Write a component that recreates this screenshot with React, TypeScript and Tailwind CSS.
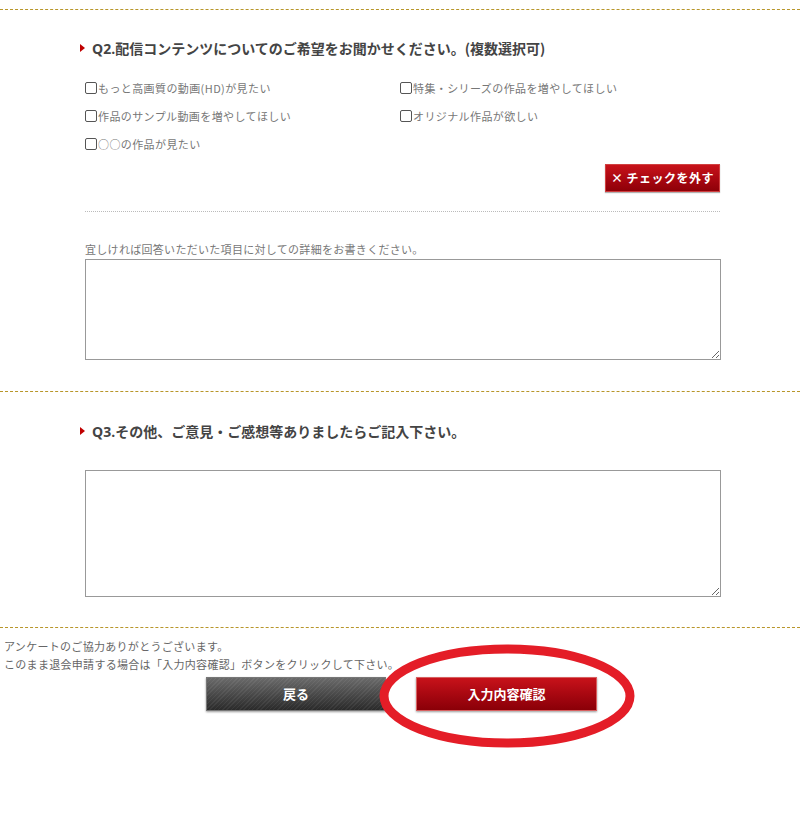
const jp = { fontFamily: '"Noto Sans CJK JP", "Open Sans", sans-serif' }
const head = { fontFamily: '"Open Sans", "Noto Sans CJK JP", sans-serif' }

const options = [
  ['もっと高画質の動画(HD)が見たい', '特集・シリーズの作品を増やしてほしい'],
  ['作品のサンプル動画を増やしてほしい', 'オリジナル作品が欲しい'],
  ['○○の作品が見たい', ''],
]

function Divider() {
  return <div className="h-0 w-full border-t border-dashed border-[#b8962a]" />
}

function Heading({ q, text }: { q: string; text: string }) {
  return (
    <h2 className="flex h-5 items-center pl-[80px] text-[14px] font-bold text-[#444]" style={head}>
      <span className="mr-[7px] h-0 w-0 border-y-[4px] border-l-[5px] border-y-transparent border-l-[#c00000]" />
      <span>{q}</span>
      <span style={jp}>{text}</span>
    </h2>
  )
}

function Check({ label }: { label: string }) {
  if (!label) return <div />
  return (
    <label className="flex h-5 items-center text-[11px] tracking-[0.4px] text-[#777]">
      <input
        type="checkbox"
        className="mr-px h-[12px] w-[12px] appearance-none rounded-[2px] border border-[#555] bg-white"
      />
      {label}
    </label>
  )
}

export default function App() {
  return (
    <div className="relative h-[830px] w-[800px] overflow-hidden bg-white" style={jp}>
      <div className="pt-[9px]">
        <Divider />
      </div>

      <div className="mt-[28px]">
        <Heading q="Q2." text="配信コンテンツについてのご希望をお聞かせください。(複数選択可)" />
      </div>

      <div className="mt-[20px] grid w-[720px] grid-cols-[315px_1fr] gap-y-[8px] pl-[85px]">
        {options.map((row, i) => (
          <div key={i} className="contents">
            <Check label={row[0]} />
            <Check label={row[1]} />
          </div>
        ))}
      </div>

      <div className="mt-[10px] flex w-[720px] justify-end">
        <button className="h-[28px] w-[115px] border border-[#d04040] bg-gradient-to-b from-[#c8121a] to-[#8e0008] text-[12px] font-bold tracking-[0.5px] text-white shadow-[0_1px_1px_rgba(0,0,0,0.3)]">
          × チェックを外す
        </button>
      </div>

      <div className="ml-[85px] mt-[19px] w-[635px] border-t border-dotted border-[#bbb]" />

      <p className="ml-[85px] mt-[29px] text-[11px] leading-[16px] tracking-[0.3px] text-[#777]">
        宜しければ回答いただいた項目に対しての詳細をお書きください。
      </p>
      <textarea className="ml-[85px] mt-[2px] block h-[101px] w-[636px] border border-[#999] bg-white" />

      <div className="mt-[31px]">
        <Divider />
      </div>

      <div className="mt-[29px]">
        <Heading q="Q3." text="その他、ご意見・ご感想等ありましたらご記入下さい。" />
      </div>

      <textarea className="ml-[85px] mt-[29px] block h-[127px] w-[636px] border border-[#999] bg-white" />

      <div className="mt-[30px]">
        <Divider />
      </div>

      <div className="mt-[9px] pl-[4px] text-[11px] leading-[18px] tracking-[0.3px] text-[#666]">
        <p>アンケートのご協力ありがとうございます。</p>
        <p>このまま退会申請する場合は「入力内容確認」ボタンをクリックして下さい。</p>
      </div>

      <div className="mt-[4px] flex gap-[30px] pl-[206px]">
        <button className="h-[34px] w-[180px] border border-[#777] bg-[repeating-linear-gradient(135deg,rgba(255,255,255,0.06)_0px,rgba(255,255,255,0.06)_1px,transparent_1px,transparent_3px),linear-gradient(to_bottom,#6a6a6a,#2a2a2a)] text-[13px] font-bold text-white shadow-[0_1px_2px_rgba(0,0,0,0.4)]">
          戻る
        </button>
        <button className="h-[34px] w-[181px] border border-[#d86060] bg-gradient-to-b from-[#c8121a] to-[#8a0008] text-[13px] font-bold text-white shadow-[0_1px_2px_rgba(0,0,0,0.4)]">
          入力内容確認
        </button>
      </div>

      <svg className="pointer-events-none absolute left-0 top-0" width="800" height="830">
        <ellipse cx="507" cy="696" rx="123" ry="47" fill="none" stroke="#e41d27" strokeWidth="9" />
      </svg>
    </div>
  )
}
